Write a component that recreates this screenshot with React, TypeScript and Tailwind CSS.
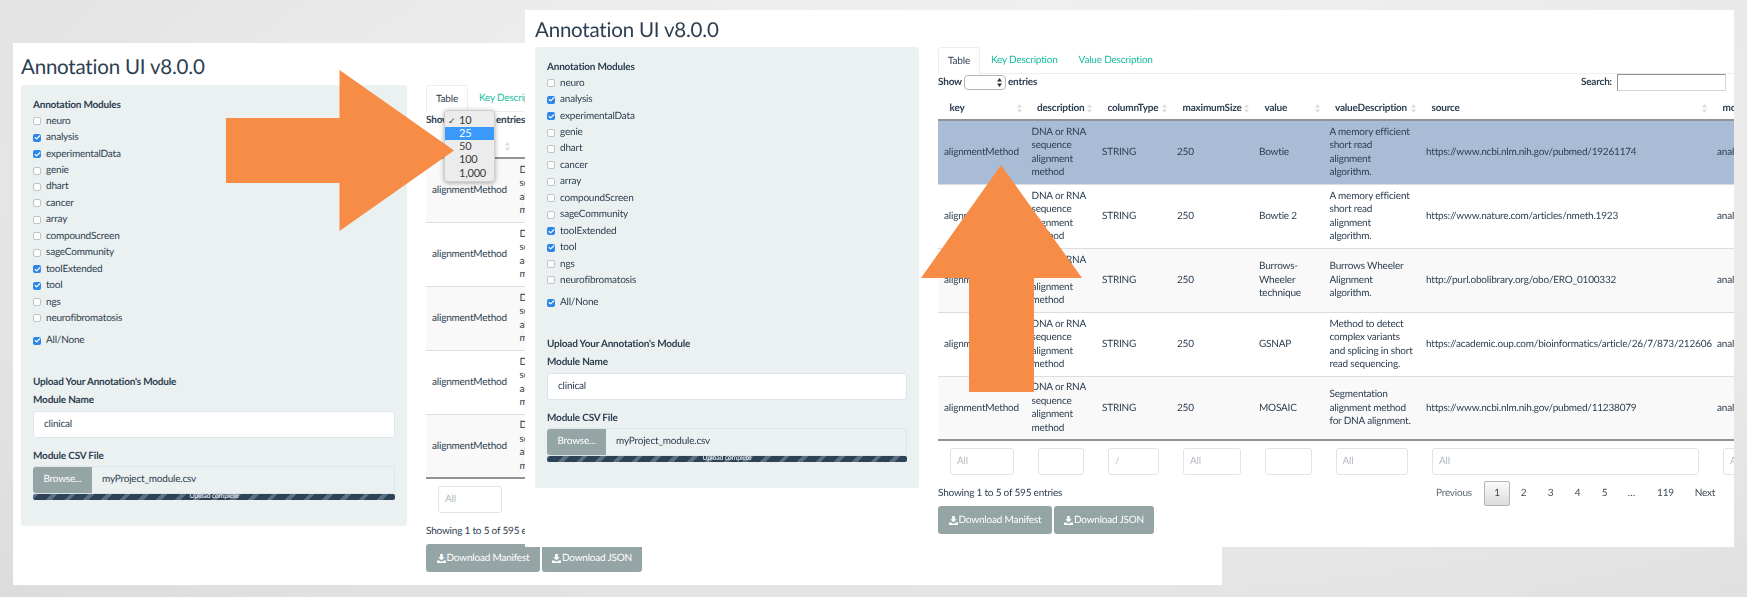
import { Check } from 'lucide-react';

const MODULES: [string, boolean][] = [
  ['neuro', false],
  ['analysis', true],
  ['experimentalData', true],
  ['genie', false],
  ['dhart', false],
  ['cancer', false],
  ['array', false],
  ['compoundScreen', false],
  ['sageCommunity', false],
  ['toolExtended', true],
  ['tool', true],
  ['ngs', false],
  ['neurofibromatosis', false],
];

const COLUMNS = ['key', 'description', 'columnType', 'maximumSize', 'value', 'valueDescription', 'source', 'module'];
const COL_WIDTHS = [87.5, 70.5, 75, 82, 70.5, 96.5, 291, 90];
const FILTERS = ['All', '', '/', 'All', '', 'All', 'All', 'All'];
const PAGES = ['2', '3', '4', '5', '…'];

const ROWS = [
  ['Bowtie', 'A memory efficient short read alignment algorithm.', 'https://www.ncbi.nlm.nih.gov/pubmed/19261174'],
  ['Bowtie 2', 'A memory efficient short read alignment algorithm.', 'https://www.nature.com/articles/nmeth.1923'],
  ['Burrows-Wheeler technique', 'Burrows Wheeler Alignment algorithm.', 'http://purl.obolibrary.org/obo/ERO_0100332'],
  ['GSNAP', 'Method to detect complex variants and splicing in short read sequencing.', 'https://academic.oup.com/bioinformatics/article/26/7/873/212606'],
  ['MOSAIC', 'Segmentation alignment method for DNA alignment.', 'https://www.ncbi.nlm.nih.gov/pubmed/11238079'],
];

function Checkbox({ label, checked }: { label: string; checked: boolean }) {
  return (
    <div className="flex items-center h-[16.45px] gap-[5px] text-[10px] text-[#2c3e50]">
      {checked ? (
        <span className="w-[8px] h-[8px] rounded-[2px] bg-[#2c86ea] flex items-center justify-center">
          <Check className="w-[7px] h-[7px] text-white" strokeWidth={4} />
        </span>
      ) : (
        <span className="w-[8px] h-[8px] rounded-[2px] bg-white border border-[#bfc4c6]" />
      )}
      <span>{label}</span>
    </div>
  );
}

function SortIcon() {
  return (
    <svg width="5" height="9" viewBox="0 0 5 9" className="shrink-0">
      <path d="M2.5 0L5 3.6H0z" fill="#dcdcdc" />
      <path d="M2.5 9L0 5.4H5z" fill="#dcdcdc" />
    </svg>
  );
}

function DownloadIcon() {
  return (
    <svg width="9" height="9" viewBox="0 0 9 9" fill="white" className="shrink-0">
      <path d="M3.2 0h2.6v3.2h2L4.5 6.2 1.2 3.2h2z" />
      <path d="M0 6.6h2.2l1.2 1h2.2l1.2-1H9V9H0z" />
    </svg>
  );
}

function Sidebar({ width }: { width: string }) {
  return (
    <div className={`${width} shrink-0 h-[441px] bg-[#ebf0f0] rounded-[3px] pt-[12px] px-[12px] text-[#2c3e50]`}>
      <div className="h-[16px] leading-[16px] text-[10px] font-bold">Annotation Modules</div>
      {MODULES.map(([label, checked]) => (
        <Checkbox key={label} label={label} checked={checked} />
      ))}
      <div className="mt-[6px]">
        <Checkbox label="All/None" checked />
      </div>
      <div className="mt-[24.5px] h-[16px] leading-[16px] text-[10px] font-bold">Upload Your Annotation's Module</div>
      <div className="mt-[2.5px] h-[16px] leading-[16px] text-[10px] font-bold">Module Name</div>
      <div className="mt-[2.5px] h-[27.5px] bg-white border border-[#dce4ec] rounded-[3px] flex items-center px-[10px] text-[10px]">
        clinical
      </div>
      <div className="mt-[9.5px] h-[16px] leading-[16px] text-[10px] font-bold">Module CSV File</div>
      <div className="mt-[2px] h-[28px] flex border border-[#dce4ec] border-l-0 rounded-[3px] text-[10px]">
        <div className="w-[59px] bg-[#95a5a6] text-white flex items-center justify-center rounded-l-[3px]">Browse...</div>
        <div className="flex-1 flex items-center pl-[10px]">myProject_module.csv</div>
      </div>
      <div className="h-[6.5px] rounded-[2px] bg-[repeating-linear-gradient(-45deg,#2c4358_0px,#2c4358_9px,#5d7080_9px,#5d7080_13px)] flex items-center justify-center text-[7px] leading-none text-white">
        Upload complete
      </div>
    </div>
  );
}

function DataTable({ selectFirst }: { selectFirst: boolean }) {
  return (
    <table className="table-fixed border-collapse w-[813px] text-[10px] text-[#2c3e50]">
      <colgroup>
        {COL_WIDTHS.map((w, i) => (
          <col key={i} style={{ width: w }} />
        ))}
      </colgroup>
      <thead>
        <tr className="border-b-2 border-[#8f9494]">
          {COLUMNS.map((col) => (
            <th key={col} className="h-[29px] p-0 pt-[6px] text-left font-bold">
              <div className="flex items-center justify-between pl-[11.5px] pr-[4px]">
                <span>{col}</span>
                <SortIcon />
              </div>
            </th>
          ))}
        </tr>
      </thead>
      <tbody>
        {ROWS.map(([value, valueDescription, source], i) => {
          const bg = selectFirst && i === 0 ? 'bg-[#a9bcd6]' : i % 2 === 0 ? 'bg-[#f9f9f9]' : 'bg-white';
          return (
            <tr key={value} className={`${bg} border-b border-[#dddddd]`}>
              <td className="h-[64px] px-[6px] pt-[1px] pb-0 leading-[13.4px] align-middle">alignmentMethod</td>
              <td className="px-[6px] pt-[1px] pb-0 leading-[13.4px] align-middle">DNA or RNA sequence alignment method</td>
              <td className="px-[6px] pt-[1px] pb-0 leading-[13.4px] align-middle">STRING</td>
              <td className="px-[6px] pt-[1px] pb-0 leading-[13.4px] align-middle">250</td>
              <td className="px-[6px] pt-[1px] pb-0 leading-[13.4px] align-middle">{value}</td>
              <td className="px-[6px] pt-[1px] pb-0 leading-[13.4px] align-middle">{valueDescription}</td>
              <td className="px-[6px] pt-[1px] pb-0 leading-[13.4px] align-middle">{source}</td>
              <td className="px-[6px] pt-[1px] pb-0 leading-[13.4px] align-middle">analysis</td>
            </tr>
          );
        })}
      </tbody>
      <tfoot>
        <tr className="border-t-2 border-[#8f9494]">
          {FILTERS.map((placeholder, i) => (
            <td key={i} className="px-[12px] pt-[7px] pb-0">
              <div className="h-[27px] bg-white border border-[#dce4ec] rounded-[3px] flex items-center pl-[6px] text-[10px] text-[#b4bcc2] overflow-hidden">
                {placeholder}
              </div>
            </td>
          ))}
        </tr>
      </tfoot>
    </table>
  );
}

function RightPane({ selectFirst }: { selectFirst: boolean }) {
  return (
    <div className="w-[796px] shrink-0 overflow-hidden text-[#2c3e50]">
      <div className="flex h-[27px] border-b border-[#eeeeee] text-[10px]">
        <div className="w-[42px] h-[27px] border border-b-0 border-[#eeeeee] rounded-t-[3px] bg-white flex items-center justify-center">
          Table
        </div>
        <div className="px-[11px] flex items-center text-[#18bc9c]">Key Description</div>
        <div className="px-[10px] flex items-center text-[#18bc9c]">Value Description</div>
      </div>
      <div className="h-[17px] flex items-center justify-between pr-[8px] text-[10px] font-bold">
        <div className="flex items-center gap-[2px]">
          <span>Show</span>
          <span className="w-[42px] h-[15px] border border-[#b4b4b4] rounded-[4px] bg-white flex items-center justify-end pr-[3px]">
            <svg width="5" height="9" viewBox="0 0 5 9">
              <path d="M2.5 0L5 3.6H0zM2.5 9L0 5.4H5z" fill="#333333" />
            </svg>
          </span>
          <span>entries</span>
        </div>
        <div className="flex items-center gap-[5px]">
          <span>Search:</span>
          <span className="w-[109px] h-[17px] bg-white border border-[#d4d4d4] border-t-[#8f8f8f] border-l-[#8f8f8f]" />
        </div>
      </div>
      <DataTable selectFirst={selectFirst} />
      <div className="h-[25px] mt-[6px] flex items-center justify-between pr-[10px] text-[10px]">
        <span>Showing 1 to 5 of 595 entries</span>
        <div className="flex items-center text-center text-[#3c4a55]">
          <span className="pr-[12px] text-[#5f6a70]">Previous</span>
          <span className="w-[26px] h-[25px] flex items-center justify-center border border-[#b5b5b5] rounded-[2px] bg-[linear-gradient(#fafafa,#dcdcdc)]">
            1
          </span>
          {PAGES.map((p) => (
            <span key={p} className="w-[27px]">{p}</span>
          ))}
          <span className="w-[41px]">119</span>
          <span className="w-[38px]">Next</span>
        </div>
      </div>
      <div className="flex gap-[2px] text-[10px] text-white">
        <div className="w-[114px] h-[28px] rounded-[3px] bg-[#95a5a6] flex items-center justify-center gap-[1px]">
          <DownloadIcon />
          Download Manifest
        </div>
        <div className="w-[100px] h-[28px] rounded-[3px] bg-[#95a5a6] flex items-center justify-center gap-[1px]">
          <DownloadIcon />
          Download JSON
        </div>
      </div>
    </div>
  );
}

function SelectMenu() {
  return (
    <div className="absolute left-[431px] top-[67px] w-[51px] h-[72px] py-[2.5px] bg-[#ececec] rounded-[4px] border border-[#d0d0d0] shadow-[0_1px_5px_rgba(0,0,0,0.35)] text-[11px] leading-[13.3px] text-[#3a3a3a]">
      <div className="h-[13.3px] pl-[3px] flex gap-[3px]">
        <span className="w-[8px] text-[9px]">✓</span>
        <span>10</span>
      </div>
      <div className="h-[13.3px] pl-[14px] bg-[#3b99fc] text-white">25</div>
      <div className="h-[13.3px] pl-[14px]">50</div>
      <div className="h-[13.3px] pl-[14px]">100</div>
      <div className="h-[13.3px] pl-[14px]">1,000</div>
    </div>
  );
}

function BackWindow() {
  return (
    <div className="absolute left-[13px] top-[43px] w-[1209px] h-[542px] bg-white pl-[8px] overflow-hidden">
      <div className="h-[42px] flex items-center pt-[7px] text-[20.5px] text-[#2c3e50]">Annotation UI v8.0.0</div>
      <div className="flex gap-[19px]">
        <Sidebar width="w-[386px]" />
        <RightPane selectFirst={false} />
      </div>
      <SelectMenu />
    </div>
  );
}

function FrontWindow() {
  return (
    <div className="absolute left-[525px] top-[10px] w-[1209px] h-[537px] bg-white pl-[10px] overflow-hidden">
      <div className="h-[37px] flex items-center pt-[3px] text-[20.5px] text-[#2c3e50]">Annotation UI v8.0.0</div>
      <div className="flex gap-[19px]">
        <Sidebar width="w-[384px]" />
        <RightPane selectFirst />
      </div>
    </div>
  );
}

export default function App() {
  return (
    <div className="relative w-[1747px] h-[597px] overflow-hidden font-[Lato,sans-serif] tracking-[-0.2px] [text-rendering:geometricPrecision] bg-[radial-gradient(ellipse_at_60%_30%,#f6f6f6_0%,#e9e9e9_55%,#dcdcdc_100%)]">
      <div className="blur-[0.35px]">
        <BackWindow />
        <FrontWindow />
      </div>
      <svg className="absolute left-0 top-0" width="1747" height="597" viewBox="0 0 1747 597">
        <path d="M226 118H339.5V70L454 150.5 339.5 231V183H226z" fill="#f68c45" />
        <path d="M1001 165L1082 278H1034V392H969V278H921z" fill="#f68c45" />
      </svg>
    </div>
  );
}
